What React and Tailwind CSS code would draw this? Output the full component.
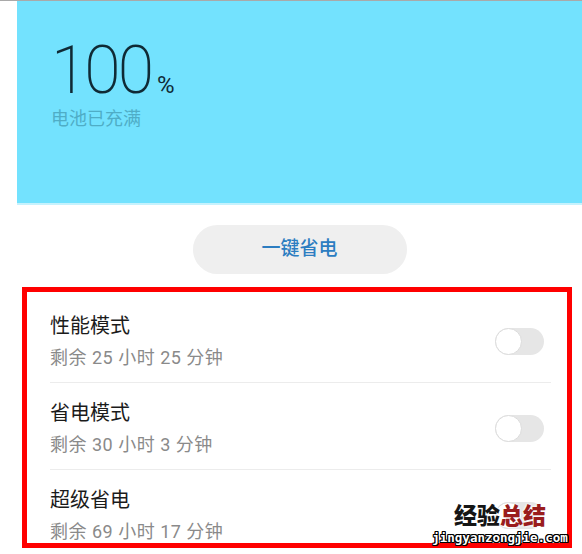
import React from 'react';

const modes = [
    { id: 1, title: '性能模式', remain: '剩余 25 小时 25 分钟' },
    { id: 2, title: '省电模式', remain: '剩余 30 小时 3 分钟' },
    { id: 3, title: '超级省电', remain: '剩余 69 小时 17 分钟' },
];

const Toggle = () => (
    <div className="relative h-[27px] w-[49px] shrink-0 rounded-full bg-[#e6e6e6]">
        <div className="absolute left-0 top-0 h-[27px] w-[27px] rounded-full border border-[#dcdcdc] bg-white" />
    </div>
);

const App = () => {
    return (
        <div className="relative h-[554px] w-[582px] overflow-hidden bg-white [font-family:Roboto,'Noto_Sans_CJK_SC',sans-serif]">
            <div className="h-px bg-[#a9a9a9]" />

            <div className="ml-[17px]">
                {/* Battery header */}
                <div className="h-[202px] bg-[#73e2fe] pl-[34px] pt-[37px]">
                    <div className="flex items-baseline text-[#0f2a35]">
                        <span className="text-[66px] font-extralight leading-none tracking-[-3px]">100</span>
                        <span className="ml-[6px] text-[24px] leading-none">%</span>
                    </div>
                    <p className="mt-[3px] text-[18px] leading-[24px] text-[#4fadc6]">电池已充满</p>
                </div>
                <div className="h-[2px] bg-[#c6f2fd]" />

                {/* One-tap saver */}
                <div className="flex justify-center pt-[20px]">
                    <button className="flex h-[49px] w-[214px] items-center justify-center rounded-full bg-[#efefef] text-[19px] font-medium text-[#2c7dc1]">
                        一键省电
                    </button>
                </div>

                {/* Mode list */}
                <div className="ml-[5px] mt-[13px] h-[261px] w-[550px] overflow-hidden border-[5px] border-[#ff0000] pt-[4px]">
                    {modes.map((mode, index) => (
                        <div key={mode.id}>
                            <div className="flex items-center pb-[12px] pl-[23px] pr-[23px] pt-[16px]">
                                <div className="flex-1">
                                    <p className="text-[20px] leading-[28px] text-[#1b1b1b]">{mode.title}</p>
                                    <p className="mt-[6px] text-[18px] leading-[24px] tracking-[0.5px] text-[#8a8a8a]">{mode.remain}</p>
                                </div>
                                <Toggle />
                            </div>
                            {index < modes.length - 1 && <div className="ml-[23px] mr-[16px] h-px bg-[#ececec]" />}
                        </div>
                    ))}
                </div>
            </div>

            {/* Watermark */}
            <div className="absolute left-[432px] top-[502px] flex w-[136px] flex-col items-center">
                <p className="text-[23px] font-black leading-[30px] [text-shadow:0_0_3px_#fff,0_0_3px_#fff]">
                    <span className="text-[#151515]">经验</span>
                    <span className="text-[#9a1d1d]">总结</span>
                </p>
                <p className="-mt-[2px] w-[136px] whitespace-nowrap text-center text-[12.5px] font-bold leading-[15px] text-white [font-family:'DejaVu_Sans_Mono',monospace] [text-shadow:-1px_0_#000,1px_0_#000,0_-1px_#000,0_1px_#000,-1px_-1px_#000,1px_1px_#000,-1px_1px_#000,1px_-1px_#000]">
                    jingyanzongjie.com
                </p>
            </div>
        </div>
    );
};

export default App;
